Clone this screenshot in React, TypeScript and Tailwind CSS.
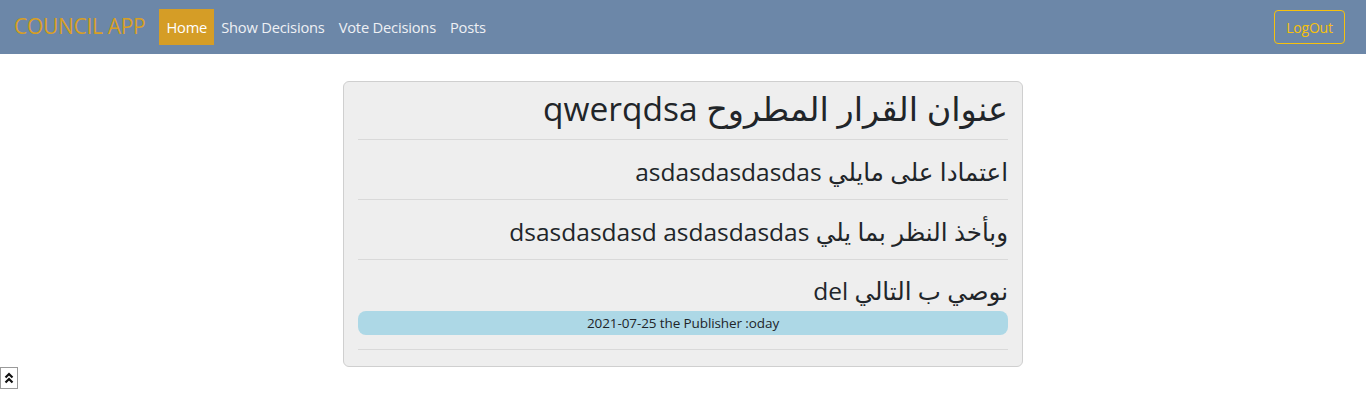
import React from "react";

const font = { fontFamily: '"Open Sans","DejaVu Sans",sans-serif' };

function Divider({ className = "" }: { className?: string }) {
  return <div className={"border-t border-[#d9d9d9] " + className} />;
}

export default function App() {
  return (
    <div className="min-h-[401px] bg-white text-[#212529] font-['Open_Sans','DejaVu_Sans',sans-serif]">
      <nav className="flex h-[54px] items-center bg-[#6c87a8] pl-[14px] pr-[21px]">
        <span className="text-[21px] tracking-[-0.3px] text-[#d89f24]">COUNCIL APP</span>
        <div className="ml-[14px] flex items-center text-[14.7px] tracking-[-0.2px] text-[#eef0f4]">
          <a className="flex h-[36px] items-center bg-[#d59d26] px-[7px] text-white">Home</a>
          <a className="flex h-[36px] items-center px-[7px]">Show Decisions</a>
          <a className="flex h-[36px] items-center px-[7px]">Vote Decisions</a>
          <a className="flex h-[36px] items-center px-[7px]">Posts</a>
        </div>
        <button className="ml-auto flex h-[34px] w-[71px] items-center justify-center rounded-[4px] border border-[#f7c10c] text-[14px] tracking-[-0.2px] text-[#f7c10c]">
          LogOut
        </button>
      </nav>

      <div className="flex justify-center pt-[27px]">
        <div
          dir="rtl"
          className="w-[680px] rounded-[6px] border border-[#cfcfcf] bg-[#eeeeee] px-[14px] pb-[16px]"
          style={font}
        >
          <div className="mt-[7px] h-[38px] text-[33.5px] leading-[38px]">عنوان القرار المطروح qwerqdsa</div>
          <Divider className="mt-[12px]" />
          <div className="mt-[17px] h-[29px] text-[24.5px] leading-[29px]">اعتمادا على مايلي asdasdasdasdas</div>
          <Divider className="mt-[13px]" />
          <div className="mt-[17px] h-[29px] text-[24.5px] leading-[29px]">وبأخذ النظر بما يلي dsasdasdasd asdasdasdas</div>
          <Divider className="mt-[13px]" />
          <div className="mt-[16px] h-[29px] text-[24.5px] leading-[29px]">نوصي ب التالي del</div>
          <div
            dir="ltr"
            className="mt-[6px] flex h-[24px] items-center justify-center rounded-[8px] bg-[#add8e6] text-[13.5px] tracking-[-0.1px]"
          >
            2021-07-25 the Publisher :oday
          </div>
          <Divider className="mt-[14px]" />
        </div>
      </div>

      <button className="fixed bottom-[12px] left-0 flex h-[22px] w-[18px] items-center justify-center border border-[#9a9a9a] bg-white">
        <svg width="10" height="12" viewBox="0 0 10 12" fill="none" stroke="#111" strokeWidth="2.2">
          <path d="M1.5 5.5 L5 2 L8.5 5.5" />
          <path d="M1.5 10.5 L5 7 L8.5 10.5" />
        </svg>
      </button>
    </div>
  );
}
